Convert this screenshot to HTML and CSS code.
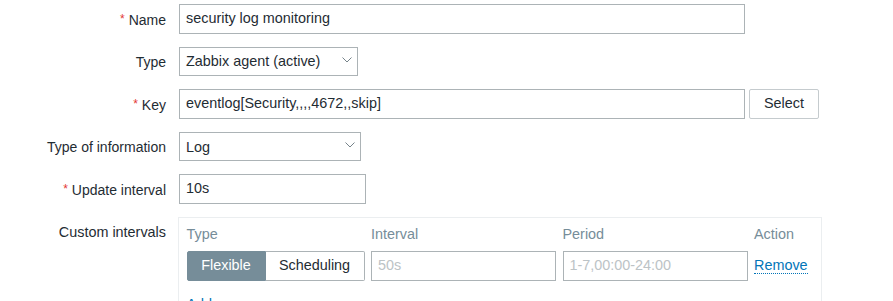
FILE: index.html
```html
<!DOCTYPE html>
<html>
<head>
<meta charset="utf-8">
<link rel="stylesheet" href="styles.css">
</head>
<body>
<div class="form">
  <div class="lbl"><span class="req">*</span> Name</div>
  <div class="ctl"><div class="field w-name">security log monitoring</div></div>

  <div class="lbl">Type</div>
  <div class="ctl">
    <div class="select w-type"><span>Zabbix agent (active)</span>
      <svg class="chev" width="10" height="6" viewBox="0 0 10 6"><path d="M0.5 0.5 L5 5 L9.5 0.5" fill="none" stroke="#76838a" stroke-width="1"/></svg>
    </div>
  </div>

  <div class="lbl"><span class="req">*</span> Key</div>
  <div class="ctl row-key">
    <div class="field w-name">eventlog[Security,,,,4672,,skip]</div>
    <div class="btn">Select</div>
  </div>

  <div class="lbl">Type of information</div>
  <div class="ctl">
    <div class="select w-info"><span>Log</span>
      <svg class="chev" width="10" height="6" viewBox="0 0 10 6"><path d="M0.5 0.5 L5 5 L9.5 0.5" fill="none" stroke="#76838a" stroke-width="1"/></svg>
    </div>
  </div>

  <div class="lbl"><span class="req">*</span> Update interval</div>
  <div class="ctl"><div class="field w-upd">10s</div></div>

  <div class="lbl lbl-top">Custom intervals</div>
  <div class="ctl ctl-top">
    <div class="box">
      <div class="ci-grid">
        <div class="th">Type</div>
        <div class="th">Interval</div>
        <div class="th">Period</div>
        <div class="th">Action</div>

        <div class="seg">
          <div class="seg-item on">Flexible</div>
          <div class="seg-item">Scheduling</div>
        </div>
        <div class="field ph">50s</div>
        <div class="field ph">1-7,00:00-24:00</div>
        <div class="act"><a class="link">Remove</a></div>
      </div>
      <div class="add"><a class="link">Add</a></div>
    </div>
  </div>
</div>
</body>
</html>
```
FILE: styles.css
```css
html, body {
  margin: 0;
  padding: 0;
  background: #ffffff;
}
body {
  font-family: "Liberation Sans", Arial, sans-serif;
  font-size: 14px;
  color: #1f2c33;
}
.form {
  display: grid;
  grid-template-columns: 166px 1fr;
  column-gap: 13px;
  row-gap: 13px;
  padding-top: 4px;
}
.lbl {
  box-sizing: border-box;
  text-align: right;
  height: 29.6px;
  line-height: 27.6px;
  padding-top: 2px;
  white-space: nowrap;
}
.lbl-top {
  height: auto;
  line-height: 17px;
  padding-top: 7px;
  font-size: 14.4px;
}
.req {
  color: #e33734;
  font-size: 12px;
  vertical-align: 2px;
}
.ctl {
  display: flex;
  align-items: center;
}
.ctl-top {
  align-items: flex-start;
}
.field {
  box-sizing: border-box;
  height: 29.6px;
  line-height: 27.6px;
  border: 1px solid #acb3b6;
  padding: 0 6px;
  background: #fff;
  white-space: nowrap;
  overflow: hidden;
  font-size: 14.4px;
}
.w-name { width: 566px; }
.w-upd { width: 187px; }
.select {
  box-sizing: border-box;
  height: 29.6px;
  border: 1px solid #acb3b6;
  padding: 0 5px 0 6px;
  display: flex;
  align-items: center;
  justify-content: space-between;
  background: #fff;
  font-size: 14.4px;
}
.w-type { width: 179px; }
.w-info { width: 182px; }
.chev {
  margin-top: -3px;
}
.row-key {
  gap: 4px;
}
.btn {
  box-sizing: border-box;
  height: 29.6px;
  width: 70px;
  line-height: 27.6px;
  text-align: center;
  border: 1px solid #c5cbce;
  border-radius: 2px;
  background: #fff;
  color: #1f2c33;
  font-size: 14.4px;
}
.box {
  box-sizing: border-box;
  width: 644px;
  margin-left: -1.5px;
  border: 1px solid #ebeef0;
  padding: 8px 8px 20px 8px;
}
.ci-grid {
  display: grid;
  grid-template-columns: 178px 185px 185px auto;
  column-gap: 6.5px;
  row-gap: 8px;
  align-items: center;
}
.th {
  color: #768d99;
  line-height: 17px;
  font-size: 14.4px;
}
.seg {
  display: flex;
  height: 29.6px;
  box-sizing: border-box;
}
.seg-item {
  box-sizing: border-box;
  height: 29.6px;
  line-height: 27.6px;
  text-align: center;
  border: 1px solid #acb3b6;
  background: #fff;
  color: #1f2c33;
  font-size: 14.4px;
}
.seg-item:first-child {
  width: 79px;
  border-radius: 2px 0 0 2px;
  border-color: #768d99;
}
.seg-item:last-child {
  flex: 1;
  border-left: none;
  border-radius: 0 2px 2px 0;
}
.seg-item.on {
  background: #768d99;
  color: #ffffff;
}
.ph {
  color: #bcc3c6;
}
.link {
  color: #0275b8;
  text-decoration: none;
  border-bottom: 1px dotted #0275b8;
  cursor: pointer;
  font-size: 14.4px;
}
.act {
  line-height: 17px;
}
.add {
  margin-top: 15px;
  line-height: 17px;
}
```
